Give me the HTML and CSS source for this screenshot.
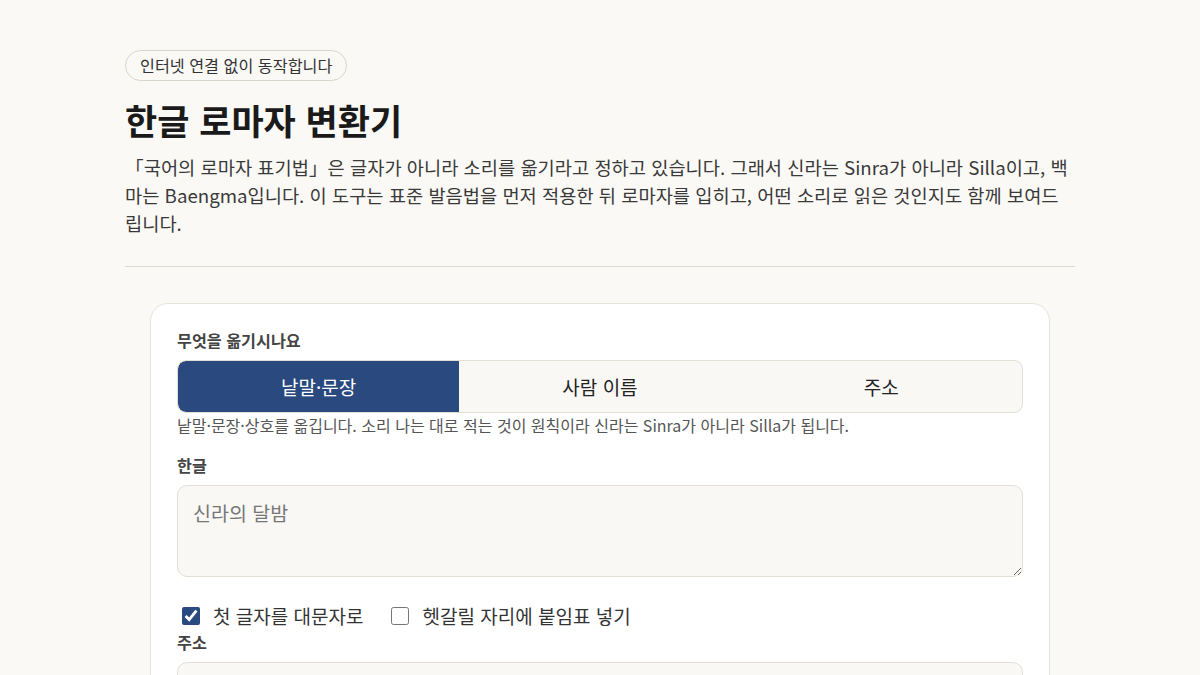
FILE: index.html
```html
<!DOCTYPE html>
<html lang="ko">
<head>
<meta charset="utf-8">
<title>한글 로마자 변환기</title>
<link rel="stylesheet" href="styles.css">
</head>
<body>
<main class="page">
  <header class="intro">
    <span class="pill">인터넷 연결 없이 동작합니다</span>
    <h1 class="title">한글 로마자 변환기</h1>
    <p class="lead">「국어의 로마자 표기법」은 글자가 아니라 소리를 옮기라고 정하고 있습니다. 그래서 신라는 Sinra가 아니라 Silla이고, 백마는 Baengma입니다. 이 도구는 표준 발음법을 먼저 적용한 뒤 로마자를 입히고, 어떤 소리로 읽은 것인지도 함께 보여드립니다.</p>
  </header>
  <hr class="rule">
  <section class="card">
    <div class="field">
      <div class="label">무엇을 옮기시나요</div>
      <div class="segments">
        <button class="seg active">낱말·문장</button>
        <button class="seg">사람 이름</button>
        <button class="seg">주소</button>
      </div>
      <div class="hint">낱말·문장·상호를 옮깁니다. 소리 나는 대로 적는 것이 원칙이라 신라는 Sinra가 아니라 Silla가 됩니다.</div>
    </div>
    <div class="field">
      <div class="label">한글</div>
      <textarea class="input" placeholder="신라의 달밤"></textarea>
    </div>
    <div class="checks">
      <label class="check"><input type="checkbox" checked><span>첫 글자를 대문자로</span></label>
      <label class="check"><input type="checkbox"><span>헷갈릴 자리에 붙임표 넣기</span></label>
    </div>
    <div class="field">
      <div class="label">주소</div>
      <textarea class="input"></textarea>
    </div>
  </section>
</main>
</body>
</html>
```
FILE: styles.css
```css
* { box-sizing: border-box; }
html, body { margin: 0; padding: 0; }
body {
  background: #faf9f6;
  color: #1f1f1f;
  font-family: "Noto Sans CJK KR", "Noto Sans", sans-serif;
}
.page {
  width: 950px;
  margin: 0 auto;
  padding-top: 50px;
}
.pill {
  display: inline-block;
  border: 1px solid #d9d5cc;
  border-radius: 999px;
  padding: 0 14px;
  height: 31px;
  line-height: 29px;
  font-size: 16.2px;
  color: #333;
  background: #faf9f6;
}
.title {
  margin: 16px 0 0;
  font-size: 35px;
  font-weight: 700;
  line-height: 46px;
  color: #1a1a1a;
}
.lead {
  margin: 10px 0 0;
  font-size: 18.7px;
  line-height: 28px;
  color: #3a3a3a;
  word-break: break-all;
}
.rule {
  margin: 29px 0 0;
  border: 0;
  border-top: 1px solid #dcd9d2;
}
.card {
  margin: 36px 25px 0;
  background: #ffffff;
  border: 1px solid #e7e3da;
  border-radius: 18px;
  padding: 24px 26px 40px;
}
.label {
  font-size: 16.2px;
  font-weight: 700;
  color: #444;
  line-height: 24px;
  margin-bottom: 8px;
}
.segments {
  display: grid;
  grid-template-columns: 1fr 1fr 1fr;
  border: 1px solid #e3dfd6;
  border-radius: 9px;
  background: #f9f8f5;
  height: 53px;
  overflow: hidden;
}
.seg {
  border: 0;
  background: transparent;
  font-family: inherit;
  font-size: 19px;
  color: #222;
  padding: 0;
  cursor: pointer;
}
.seg.active {
  background: #2a4a7f;
  color: #fff;
  border-radius: 8px 0 0 8px;
}
.hint {
  font-size: 16px;
  color: #555;
  line-height: 22px;
  margin-top: 1px;
}
.field + .field { margin-top: 17px; }
.input {
  display: block;
  width: 100%;
  height: 92px;
  margin-top: 3px;
  resize: vertical;
  border: 1px solid #e3dfd6;
  border-radius: 10px;
  background: #f9f8f5;
  padding: 12px 15px;
  font-family: inherit;
  font-size: 19.5px;
  color: #222;
}
.input::placeholder { color: #777; }
.checks {
  display: flex;
  gap: 23px;
  margin-top: 25px;
  height: 28px;
  line-height: 28px;
}
.check {
  display: flex;
  align-items: center;
  gap: 13px;
  font-size: 19px;
  color: #333;
}
.check input {
  margin: 0 0 0 5px;
  width: 18px;
  height: 18px;
  accent-color: #2a4a7f;
}
.checks + .field { margin-top: 0; }
```
